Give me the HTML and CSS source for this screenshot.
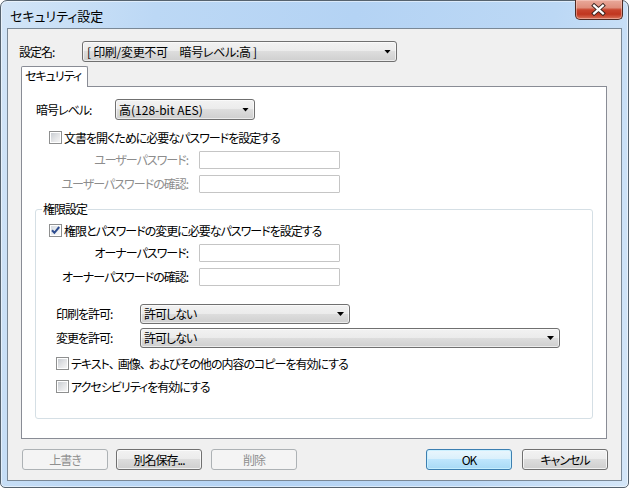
FILE: index.html
```html
<!DOCTYPE html>
<html lang="ja">
<head>
<meta charset="utf-8">
<title>セキュリティ設定</title>
<link rel="stylesheet" href="styles.css">
</head>
<body>
<div class="window">
  <div class="titlebar">
    <span class="title">セキュリティ設定</span>
    <div class="close-btn">
      <svg width="48" height="20" viewBox="0 0 48 20">
        <path d="M19.5 6.5 L28.5 14.5 M28.5 6.5 L19.5 14.5" stroke="#3b2520" stroke-width="4.2" stroke-linecap="square" fill="none"/>
        <path d="M19.5 6.5 L28.5 14.5 M28.5 6.5 L19.5 14.5" stroke="#ffffff" stroke-width="2.2" stroke-linecap="square" fill="none"/>
      </svg>
    </div>
  </div>
  <div class="client">
    <div class="name-row">
      <span class="name-label">設定名:</span>
      <div class="combo combo-name"><span class="combo-text">[ 印刷/変更不可　暗号レベル:高 ]</span><span class="arrow"></span></div>
    </div>
    <div class="tabs"><div class="tab">セキュリティ</div></div>
    <div class="panel">
      <div class="enc-row">
        <span class="enc-label">暗号レベル:</span>
        <div class="combo combo-enc"><span class="combo-text latin">高(128-bit AES)</span><span class="arrow"></span></div>
      </div>
      <div class="check-row open-check">
        <span class="cb"><span class="cb-inner"></span></span>
        <span>文書を開くために必要なパスワードを設定する</span>
      </div>
      <div class="pw-grid user disabled">
        <span class="pw-label">ユーザーパスワード:</span>
        <span class="textbox"></span>
        <span class="pw-label">ユーザーパスワードの確認:</span>
        <span class="textbox"></span>
      </div>
      <div class="group">
        <div class="group-title">権限設定</div>
        <div class="check-row owner-check">
          <span class="cb checked"><span class="cb-inner"><svg width="9" height="9" viewBox="0 0 9 9"><path d="M1 4.2 L3.4 6.8 L8.2 1" stroke="#2e4c8f" stroke-width="2" fill="none"/></svg></span></span>
          <span>権限とパスワードの変更に必要なパスワードを設定する</span>
        </div>
        <div class="pw-grid owner">
          <span class="pw-label">オーナーパスワード:</span>
          <span class="textbox"></span>
          <span class="pw-label">オーナーパスワードの確認:</span>
          <span class="textbox"></span>
        </div>
        <div class="perm-row print">
          <span class="perm-label">印刷を許可:</span>
          <div class="combo combo-print"><span class="combo-text">許可しない</span><span class="arrow"></span></div>
        </div>
        <div class="perm-row change">
          <span class="perm-label">変更を許可:</span>
          <div class="combo combo-change"><span class="combo-text">許可しない</span><span class="arrow"></span></div>
        </div>
        <div class="check-row copy">
          <span class="cb"><span class="cb-inner"></span></span>
          <span>テキスト<span class="comma">、</span>画像<span class="comma">、</span>およびその他の内容のコピーを有効にする</span>
        </div>
        <div class="check-row access">
          <span class="cb"><span class="cb-inner"></span></span>
          <span>アクセシビリティを有効にする</span>
        </div>
      </div>
    </div>
    <div class="buttons">
      <div class="btn disabled">上書き</div>
      <div class="btn save">別名保存...</div>
      <div class="btn disabled del">削除</div>
      <div class="btn default ok">OK</div>
      <div class="btn cancel">キャンセル</div>
    </div>
  </div>
</div>
</body>
</html>
```
FILE: styles.css
```css
* { box-sizing: border-box; }
html, body { margin: 0; padding: 0; }
body {
  width: 629px;
  height: 488px;
  overflow: hidden;
  background: #ffffff;
  font-family: "Noto Sans CJK JP", "Noto Sans", sans-serif;
  font-size: 12px;
  line-height: 14px;
  color: #000;
  font-feature-settings: "palt" 1;
  letter-spacing: -1px;
  white-space: nowrap;
}

.window {
  width: 629px;
  height: 488px;
  display: flex;
  flex-direction: column;
  border: 1px solid #56636f;
  border-radius: 7px 7px 5px 5px;
  padding: 0 6px 6px;
  background: linear-gradient(100deg, #d3e5f7 0%, #bcd8f5 22%, #b4d3f4 50%, #bcd8f5 78%, #d4e6f8 100%);
  box-shadow: inset 0 0 0 1px rgba(255, 255, 255, 0.5);
}

.titlebar {
  height: 27px;
  display: flex;
  align-items: center;
}
.title {
  padding-left: 3px;
  padding-top: 2px;
  font-size: 13px;
  letter-spacing: 0;
  color: #000;
}
.close-btn {
  margin-left: auto;
  margin-right: -1px;
  align-self: flex-start;
  margin-top: -1px;
  width: 48px;
  height: 20px;
  border: 1px solid #4f2a22;
  border-top: none;
  border-radius: 0 0 5px 5px;
  background: linear-gradient(#e9a99b 0%, #df8e7c 40%, #c8442d 52%, #c0361f 75%, #d9735a 100%);
  box-shadow: inset 0 0 0 1px rgba(255, 220, 210, 0.45);
  display: flex;
  overflow: hidden;
}
.close-btn svg { display: block; margin-left: -1px; margin-top: -1px; }

.client {
  flex: 1;
  display: flex;
  flex-direction: column;
  border: 1px solid #7a8896;
  background: #f0f0f0;
  padding: 12px 14px 10px 11px;
}

.name-row {
  display: flex;
  align-items: center;
  height: 21px;
}
.name-label { width: 63px; }

.combo {
  display: flex;
  align-items: center;
  height: 21px;
  border: 1px solid #707070;
  border-radius: 3px;
  padding-left: 3px;
  background: linear-gradient(#f2f2f2 0%, #ebebeb 50%, #dddddd 50%, #cfcfcf 100%);
  box-shadow: inset 0 0 0 1px rgba(255, 255, 255, 0.6);
}
.combo-text { white-space: pre; }
.combo-text.latin { letter-spacing: 0; }
.arrow {
  margin-left: auto;
  margin-right: 5px;
  width: 7px;
  height: 4px;
  background: #000;
  clip-path: polygon(0 0, 100% 0, 50% 100%);
}
.combo-name { width: 315px; padding-left: 4px; }
.combo-name .combo-text { letter-spacing: -0.3px; }
.combo-enc { width: 140px; }
.combo-print { width: 210px; height: 20px; }
.combo-change { width: 420px; height: 20px; }

.tabs {
  display: flex;
  margin: 4px 0 -1px 2px;
  position: relative;
  z-index: 1;
}
.tab {
  width: 67px;
  height: 21px;
  border: 1px solid #898c95;
  border-bottom: none;
  border-radius: 2px 2px 0 0;
  background: #ffffff;
  padding: 2px 0 0 3px;
}

.panel {
  flex: 1;
  margin-left: 2px;
  border: 1px solid #898c95;
  background: #ffffff;
  padding-top: 12px;
  display: flex;
  flex-direction: column;
}

.enc-row {
  display: flex;
  align-items: center;
  height: 21px;
  margin-left: 14px;
}
.enc-label { width: 79px; }

.check-row {
  display: flex;
  align-items: center;
  height: 13px;
}
.comma { letter-spacing: 3px; }
.cb {
  width: 13px;
  height: 13px;
  flex: none;
  margin-right: 2px;
  border: 1px solid #8e8f8f;
  background: #ffffff;
  padding: 1px;
  display: flex;
}
.cb-inner {
  flex: 1;
  display: flex;
  background: linear-gradient(135deg, #c9cdd2 0%, #e4e5e7 55%, #f5f5f5 100%);
}
.cb.checked .cb-inner {
  background: linear-gradient(135deg, #d6dbe1 0%, #eceef0 55%, #f8f8f8 100%);
}
.cb-inner svg { display: block; }

.open-check { margin: 11px 0 0 27px; }

.pw-grid {
  display: grid;
  grid-template-columns: 166px 141px;
  column-gap: 11px;
  row-gap: 6px;
  margin-top: 7px;
}
.pw-label {
  text-align: right;
  line-height: 18px;
  height: 18px;
}
.pw-grid.disabled .pw-label { color: #8d8d8d; }
.textbox {
  height: 18px;
  border: 1px solid #c5c5c5;
  border-radius: 1px;
  background: #ffffff;
}

.group {
  margin: 16px 13px 0;
  border: 1px solid #d5dfe5;
  border-radius: 3px;
  padding-bottom: 25px;
}
.group-title {
  width: fit-content;
  margin: -8px 0 0 6px;
  padding: 0 1px;
  background: #ffffff;
  line-height: 14px;
  height: 14px;
}
.owner-check { margin: 8px 0 0 13px; }
.pw-grid.owner { grid-template-columns: 152px 141px; }

.perm-row {
  display: flex;
  align-items: center;
  height: 20px;
  margin-left: 20px;
}
.perm-row.print { margin-top: 18px; }
.perm-row.change { margin-top: 4px; }
.perm-label { width: 84px; }

.check-row.copy { margin: 9px 0 0 20px; }
.check-row.access { margin: 10px 0 0 20px; }

.buttons {
  display: flex;
  height: 21px;
  margin: 10px -1px 0 3px;
}
.btn {
  width: 86px;
  height: 21px;
  border: 1px solid #707070;
  border-radius: 3px;
  background: linear-gradient(#f2f2f2 0%, #ebebeb 50%, #dddddd 50%, #cfcfcf 100%);
  box-shadow: inset 0 0 0 1px rgba(255, 255, 255, 0.7);
  display: flex;
  align-items: center;
  justify-content: center;
  line-height: 14px;
}
.btn.disabled {
  border-color: #adb2b5;
  background: #f4f4f4;
  color: #8f8f8f;
  box-shadow: none;
}
.btn.save { margin-left: 8px; }
.btn.del { margin-left: 9px; }
.btn.default {
  margin-left: auto;
  border-color: #3c7fb1;
  background: linear-gradient(#eaf6fd 0%, #d9f0fc 50%, #bee6fd 50%, #a7d9f5 100%);
  box-shadow: inset 0 0 0 1px rgba(200, 240, 255, 0.9);
}
.btn.cancel { margin-left: 10px; }
```
